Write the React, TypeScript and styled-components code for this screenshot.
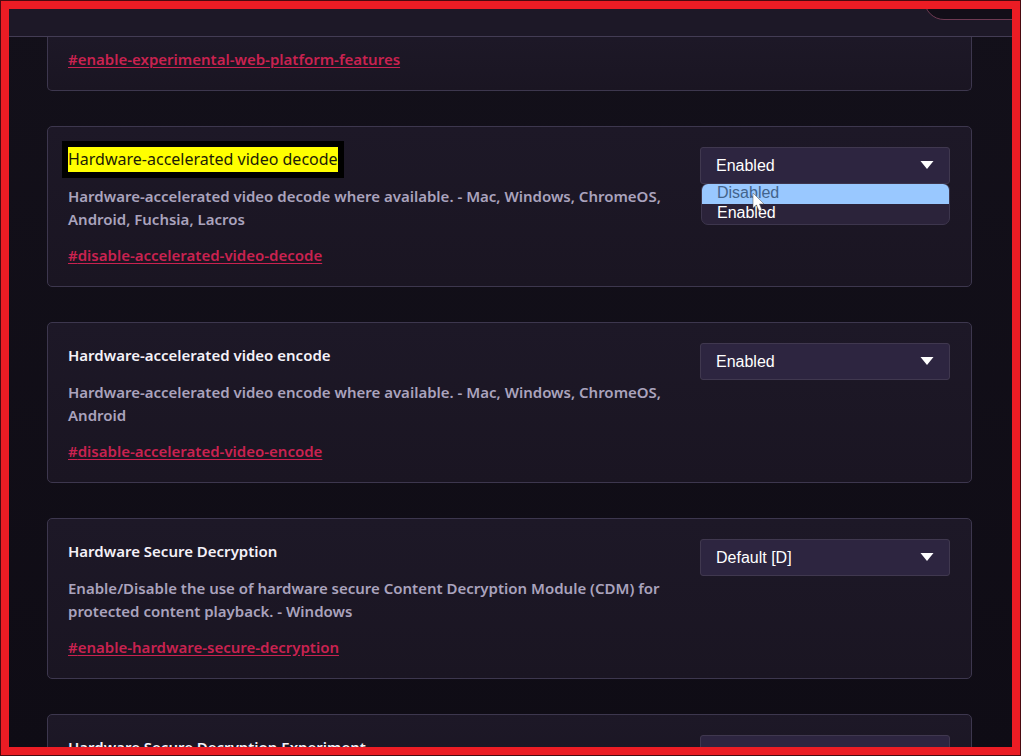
import React, { useState } from "react";
import styled, { createGlobalStyle, css } from "styled-components";

const GlobalStyle = createGlobalStyle`
  *, *::before, *::after { box-sizing: border-box; }
  body { margin: 0; background: #4a0a10; }
`;

const sans = '"Noto Sans", "Open Sans", sans-serif';
const arial = '"Liberation Sans", Arial, sans-serif';

const Screen = styled.div`
  position: relative;
  height: 100vh;
  overflow: hidden;
  padding: 9px;
  display: flex;
  flex-direction: column;
  background: linear-gradient(#13101a, #0f0c15);
  font-family: ${sans};
`;

const Frame = styled.div`
  position: absolute;
  inset: 0;
  border: 1px solid #4a0a10;
  pointer-events: none;
  &::before {
    content: "";
    position: absolute;
    inset: 0;
    border: 8px solid #eb1c24;
  }
`;

const Header = styled.header`
  flex: none;
  height: 28px;
  display: flex;
  align-items: flex-end;
  justify-content: flex-end;
  padding-bottom: 16px;
  background: #1d1827;
  border-bottom: 1px solid #433c54;
`;

const ResetButton = styled.button`
  flex: none;
  width: 136px;
  height: 40px;
  margin-right: -48px;
  border: 1px solid #6e3a52;
  border-radius: 20px;
  background: #120e18;
`;

const Experiments = styled.main`
  flex: 1;
  min-height: 0;
  overflow: hidden;
  display: flex;
  flex-direction: column;
  gap: 35px;
  padding: 0 40px 0 38px;
`;

const Card = styled.section<{ $clipped?: boolean }>`
  flex: none;
  display: flex;
  justify-content: space-between;
  gap: 24px;
  padding: 20px 21px 19px 20px;
  border: 1px solid #3d374e;
  border-radius: 5px;
  background: linear-gradient(#1d1827, #1a1522);
  ${(p) =>
    p.$clipped &&
    css`
      padding-top: 11px;
      border-top: 0;
      border-radius: 0 0 5px 5px;
    `}
`;

const Info = styled.div`
  flex: 1;
  min-width: 0;
  font-size: 15px;
  font-weight: 600;
  line-height: 23px;
`;

const Title = styled.h2`
  margin: 0 0 13px;
  font: inherit;
  line-height: 25px;
  color: #f4f1f8;
`;

const Highlight = styled.mark`
  display: inline-block;
  vertical-align: top;
  background: #ffff00;
  color: #1c1c06;
  font-size: 16px;
  font-weight: 400;
  outline: 6px solid #000;
`;

const Description = styled.p`
  margin: 0 0 13px;
  color: #aaa3bd;
`;

const FlagLink = styled.a`
  color: #c92250;
  text-decoration: underline;
  text-underline-offset: 2px;
`;

const Picker = styled.div`
  position: relative;
  flex: none;
  width: 250px;
`;

const Select = styled.select`
  appearance: none;
  display: block;
  width: 100%;
  height: 37px;
  padding: 0 15px;
  border: 1px solid #40384f;
  border-radius: 3px;
  background: #2d2540;
  color: #fff;
  font-family: ${arial};
  font-size: 16px;
`;

const Arrow = styled.svg`
  position: absolute;
  top: 14px;
  right: 16px;
  width: 14px;
  height: 8px;
  fill: #fff;
  pointer-events: none;
`;

const Menu = styled.ul`
  position: absolute;
  top: 36px;
  left: 1px;
  right: 0;
  margin: 0;
  padding: 0;
  list-style: none;
  overflow: hidden;
  border: 1px solid #3d364d;
  border-radius: 7px;
  background: #2b233a;
  font-family: ${arial};
  font-size: 16px;
`;

const Option = styled.li<{ $active?: boolean }>`
  height: 20px;
  padding: 0 15px;
  line-height: 18px;
  color: ${(p) => (p.$active ? "#43648c" : "#fff")};
  background: ${(p) => (p.$active ? "#99c8ff" : "transparent")};
`;

const Pointer = styled.svg`
  position: absolute;
  top: 45px;
  left: 52px;
  width: 14px;
  height: 21px;
`;

type Flag = {
  title: string;
  text: string;
  id: string;
  value: string;
  options: string[];
  open?: boolean;
};

const flags: Flag[] = [
  {
    title: "Hardware-accelerated video decode",
    text: "Hardware-accelerated video decode where available. - Mac, Windows, ChromeOS, Android, Fuchsia, Lacros",
    id: "disable-accelerated-video-decode",
    value: "Enabled",
    options: ["Disabled", "Enabled"],
    open: true,
  },
  {
    title: "Hardware-accelerated video encode",
    text: "Hardware-accelerated video encode where available. - Mac, Windows, ChromeOS, Android",
    id: "disable-accelerated-video-encode",
    value: "Enabled",
    options: ["Disabled", "Enabled"],
  },
  {
    title: "Hardware Secure Decryption",
    text: "Enable/Disable the use of hardware secure Content Decryption Module (CDM) for protected content playback. - Windows",
    id: "enable-hardware-secure-decryption",
    value: "Default [D]",
    options: ["Default [D]", "Enabled", "Disabled"],
  },
  {
    title: "Hardware Secure Decryption Experiment",
    text: "",
    id: "",
    value: "Default [D]",
    options: ["Default [D]", "Enabled", "Disabled"],
  },
];

function FlagCard({ flag }: { flag: Flag }) {
  const [value, setValue] = useState(flag.value);
  return (
    <Card>
      <Info>
        <Title>{flag.open ? <Highlight>{flag.title}</Highlight> : flag.title}</Title>
        {flag.text && <Description>{flag.text}</Description>}
        {flag.id && <FlagLink href={`#${flag.id}`}>#{flag.id}</FlagLink>}
      </Info>
      <Picker>
        <Select aria-label={flag.title} value={value} onChange={(e) => setValue(e.target.value)}>
          {flag.options.map((o) => (
            <option key={o}>{o}</option>
          ))}
        </Select>
        <Arrow viewBox="0 0 14 8" aria-hidden="true">
          <path d="M0.5 0H13.5L7 8Z" />
        </Arrow>
        {flag.open && (
          <>
            <Menu role="listbox" aria-label={flag.title}>
              {flag.options.map((o, i) => (
                <Option key={o} role="option" aria-selected={o === value} $active={i === 0}>
                  {o}
                </Option>
              ))}
            </Menu>
            <Pointer viewBox="0 0 14 21" aria-hidden="true">
              <path d="M1 1V16L4.5 13L7 19L10 18L7.5 12H12Z" fill="#fff" stroke="#555" strokeWidth="0.5" />
            </Pointer>
          </>
        )}
      </Picker>
    </Card>
  );
}

export default function App() {
  return (
    <Screen>
      <GlobalStyle />
      <Header>
        <ResetButton aria-label="Reset all" />
      </Header>
      <Experiments>
        <Card $clipped>
          <Info>
            <FlagLink href="#enable-experimental-web-platform-features">
              #enable-experimental-web-platform-features
            </FlagLink>
          </Info>
        </Card>
        {flags.map((flag) => (
          <FlagCard key={flag.title} flag={flag} />
        ))}
      </Experiments>
      <Frame />
    </Screen>
  );
}
